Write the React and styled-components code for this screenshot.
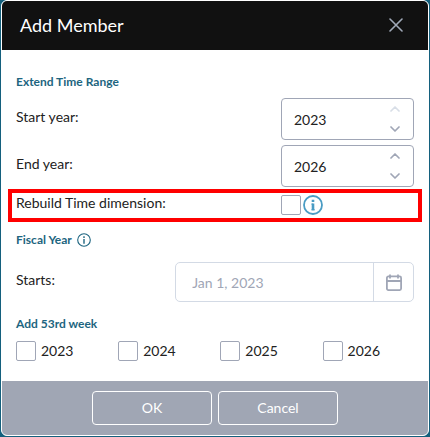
import React, { useState } from 'react';
import styled, { createGlobalStyle } from 'styled-components';

const GlobalStyle = createGlobalStyle`
    * {
        box-sizing: border-box;
    }
    body {
        margin: 0;
        background-color: #14607d;
        font-family: Lato, "Liberation Sans", sans-serif;
        font-size: 14px;
        color: #222222;
    }
    button, input {
        font-family: inherit;
        font-size: inherit;
        color: inherit;
    }
`;

const Page = styled.div`
    padding: 0 1px 1px;
`;

const Dialog = styled.form`
    width: 100%;
    border: 1px solid #ffffff;
    border-radius: 6px;
    background-color: #ffffff;
    overflow: hidden;
`;

const Header = styled.header`
    display: flex;
    align-items: center;
    justify-content: space-between;
    height: 49px;
    padding: 0 23px 2px 18px;
    background-color: #111111;
`;

const Title = styled.h1`
    margin: 0;
    font-size: 18px;
    font-weight: 400;
    line-height: 24px;
    color: #ffffff;
`;

const CloseButton = styled.button`
    display: flex;
    padding: 2px;
    border: none;
    background: none;
    color: #a0a9b8;
    cursor: pointer;
`;

const Body = styled.div`
    padding: 24px 14px 20px;
`;

const SectionTitle = styled.h2`
    display: flex;
    align-items: center;
    gap: 5px;
    margin: ${props => props.$top || '0'} 0 0;
    font-size: 12px;
    font-weight: 700;
    line-height: 16px;
    color: #1d6580;
`;

const Row = styled.div`
    display: flex;
    align-items: center;
    justify-content: space-between;
    margin-top: ${props => props.$top};
`;

const Label = styled.label`
    padding-bottom: 4px;
    line-height: 16px;
`;

const NumberBox = styled.div`
    display: flex;
    width: 133px;
    height: 42px;
    border: 1px solid #a0a6b6;
    border-radius: 4px;
`;

const NumberInput = styled.input`
    flex: 1;
    min-width: 0;
    padding: 0 0 0 12px;
    border: none;
    outline: none;
    background: none;
`;

const Spinner = styled.div`
    display: flex;
    flex-direction: column;
    width: 36px;
`;

const SpinButton = styled.button`
    display: flex;
    flex: 1;
    align-items: center;
    justify-content: center;
    padding: 0;
    border: none;
    background: none;
    color: #a0a6b6;

    &:disabled {
        color: #d8dee7;
    }
`;

const Highlight = styled.div`
    display: flex;
    justify-content: space-between;
    margin: 2px -8px 0;
    padding: 2px 4px 3px;
    border: 4px solid #ff0000;
`;

const HighlightControls = styled.div`
    display: flex;
    align-items: center;
    gap: 2px;
    width: 133px;
`;

const Checkbox = styled.input`
    appearance: none;
    flex: none;
    width: 20px;
    height: 20px;
    margin: 0;
    border: 1px solid #a0a6b6;
    border-radius: 2px;
    background-color: #ffffff;

    &:checked {
        background-color: #1d6580;
    }
`;

const InfoButton = styled.button`
    display: flex;
    padding: 0;
    border: none;
    background: none;
    color: ${props => props.$color};
`;

const DateBox = styled.div`
    display: flex;
    width: 60%;
    height: 40px;
    border: 1px solid #d3dae5;
    border-radius: 5px;
`;

const DateInput = styled.input`
    flex: 1;
    min-width: 0;
    padding: 0 0 0 16px;
    border: none;
    outline: none;
    background: none;
    color: #a0a6b6;
`;

const DateButton = styled.button`
    display: flex;
    align-items: center;
    justify-content: center;
    width: 40px;
    padding: 0;
    border: none;
    border-left: 1px solid #d3dae5;
    background: none;
    color: #a0a6b6;
`;

const Weeks = styled.div`
    display: flex;
    justify-content: space-between;
    margin-top: 9px;
    padding-right: 34px;
`;

const WeekOption = styled.label`
    display: flex;
    align-items: center;
    gap: 5px;
    line-height: 20px;
`;

const Footer = styled.footer`
    display: flex;
    justify-content: center;
    gap: 6px;
    padding: 10px;
    background-color: #a0a6b4;
`;

const FooterButton = styled.button`
    width: 120px;
    height: 34px;
    padding: 0 0 2px;
    border: 1px solid #ffffff;
    border-radius: 4px;
    background: none;
    color: #ffffff;
    cursor: pointer;
`;

const CloseIcon = () => (
    <svg width="14" height="14" viewBox="0 0 14 14" fill="none" stroke="currentColor" strokeWidth="1.6" strokeLinecap="round">
        <path d="M1 1l12 12M13 1L1 13" />
    </svg>
);

const Chevron = ({ down }) => (
    <svg width="10" height="6" viewBox="0 0 10 6" fill="none" stroke="currentColor" strokeWidth="1.7" strokeLinecap="round" strokeLinejoin="round">
        <path d={down ? 'M1 1l4 4 4-4' : 'M1 5l4-4 4 4'} />
    </svg>
);

const InfoIcon = ({ size, thick }) => (
    <svg width={size} height={size} viewBox="0 0 20 20" fill="none" stroke="currentColor">
        <circle cx="10" cy="10" r="9" strokeWidth={thick ? 1.8 : 1.6} />
        <path d="M10 4.8v2.2M10 8.6v6.6" strokeWidth={thick ? 2.6 : 2} />
        {thick && <path d="M8.4 9.1h1.6M8.4 14.8h3.4" strokeWidth="1" />}
    </svg>
);

const CalendarIcon = () => (
    <svg width="16" height="17" viewBox="0 0 16 17" fill="none" stroke="currentColor" strokeWidth="1.8">
        <rect x="0.9" y="2.4" width="14.2" height="13.7" rx="1.5" />
        <path d="M1 7h14M4 0.4v4M12 0.4v4" />
    </svg>
);

function YearField({ id, label, value, onChange, min, top }) {
    return (
        <Row $top={top}>
            <Label htmlFor={id}>{label}</Label>
            <NumberBox>
                <NumberInput
                    id={id}
                    inputMode="numeric"
                    value={value}
                    onChange={e => onChange(Number(e.target.value) || 0)}
                />
                <Spinner>
                    <SpinButton type="button" aria-label="Increase" disabled={min} onClick={() => onChange(value + 1)}>
                        <Chevron />
                    </SpinButton>
                    <SpinButton type="button" aria-label="Decrease" onClick={() => onChange(value - 1)}>
                        <Chevron down />
                    </SpinButton>
                </Spinner>
            </NumberBox>
        </Row>
    );
}

const years = [2023, 2024, 2025, 2026];

export default function App() {
    const [start, setStart] = useState(2023);
    const [end, setEnd] = useState(2026);

    return (
        <Page>
            <GlobalStyle />
            <Dialog onSubmit={e => e.preventDefault()}>
                <Header>
                    <Title>Add Member</Title>
                    <CloseButton type="button" aria-label="Close"><CloseIcon /></CloseButton>
                </Header>
                <Body>
                    <SectionTitle>Extend Time Range</SectionTitle>
                    <YearField id="start" label="Start year:" value={start} onChange={setStart} min={start >= 2023} top="8px" />
                    <YearField id="end" label="End year:" value={end} onChange={setEnd} top="5px" />
                    <Highlight>
                        <Label htmlFor="rebuild">Rebuild Time dimension:</Label>
                        <HighlightControls>
                            <Checkbox type="checkbox" id="rebuild" />
                            <InfoButton type="button" aria-label="About rebuilding" $color="#4a9cc4">
                                <InfoIcon size={20} thick />
                            </InfoButton>
                        </HighlightControls>
                    </Highlight>
                    <SectionTitle $top="10px">
                        Fiscal Year
                        <InfoButton type="button" aria-label="About fiscal year" $color="#1d6580">
                            <InfoIcon size={14} />
                        </InfoButton>
                    </SectionTitle>
                    <Row $top="14px">
                        <Label htmlFor="starts">Starts:</Label>
                        <DateBox>
                            <DateInput id="starts" defaultValue="Jan 1, 2023" disabled />
                            <DateButton type="button" aria-label="Choose date" disabled><CalendarIcon /></DateButton>
                        </DateBox>
                    </Row>
                    <SectionTitle $top="14px">Add 53rd week</SectionTitle>
                    <Weeks>
                        {years.map(year => (
                            <WeekOption key={year}>
                                <Checkbox type="checkbox" />
                                {year}
                            </WeekOption>
                        ))}
                    </Weeks>
                </Body>
                <Footer>
                    <FooterButton type="submit">OK</FooterButton>
                    <FooterButton type="button">Cancel</FooterButton>
                </Footer>
            </Dialog>
        </Page>
    );
}
